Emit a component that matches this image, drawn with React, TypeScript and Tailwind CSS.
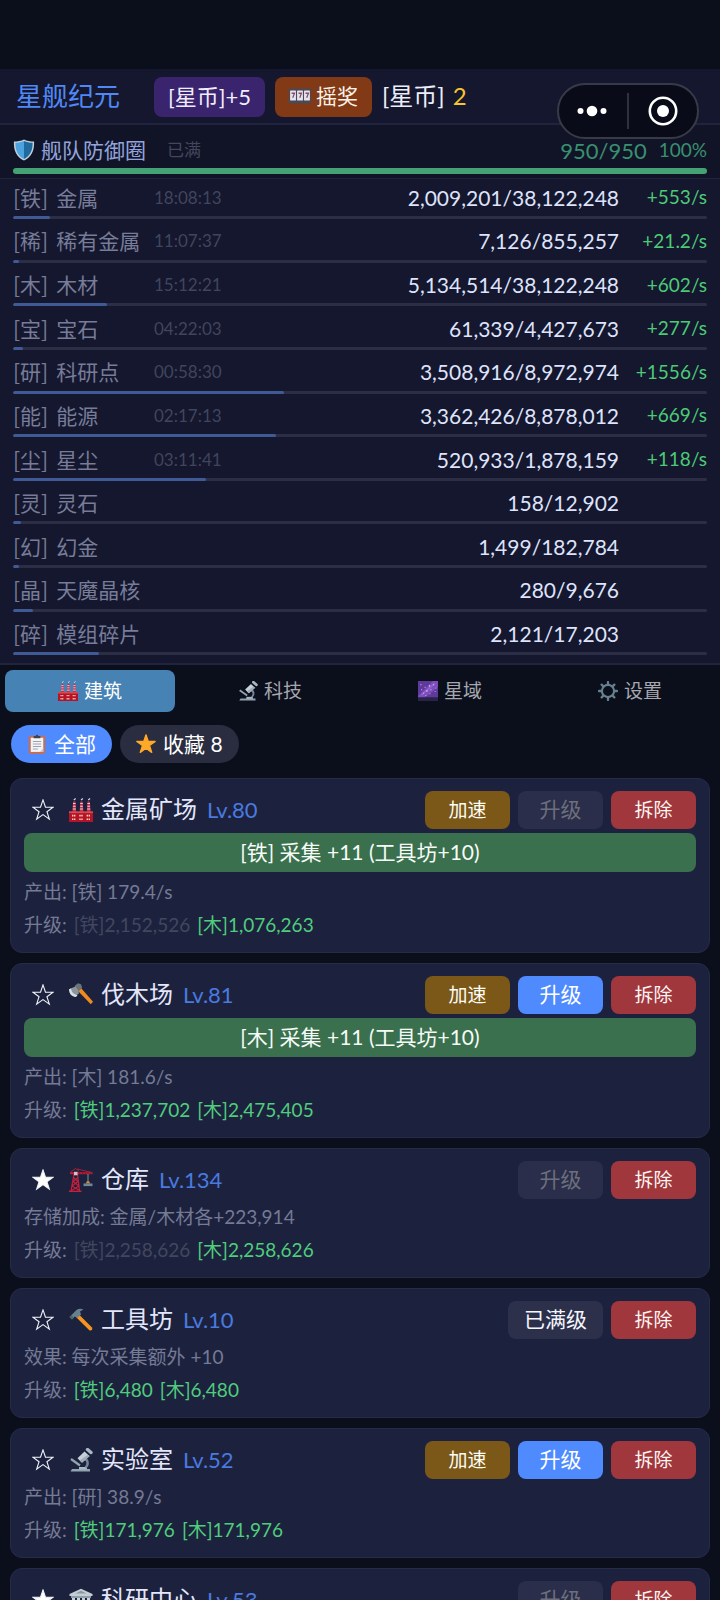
import { useState } from "react";
import type { ReactNode } from "react";

type Cost = { label: string; value: string; enough: boolean };

type Building = {
  name: string;
  level: number;
  icon: ReactNode;
  starred?: boolean;
  boost?: boolean;
  upgrade: "ready" | "disabled" | "max";
  collect?: string;
  effect: string;
  costs: Cost[];
};

function Icon({ className, children }: { className: string; children: ReactNode }) {
  return (
    <svg viewBox="0 0 24 24" className={`shrink-0 ${className}`} aria-hidden="true">
      {children}
    </svg>
  );
}

function FactoryIcon({ className }: { className: string }) {
  return (
    <Icon className={className}>
      {[3.6, 10.8, 18].map((x) => (
        <g key={x}>
          <path d={`M${x + 0.5} 3.500h2.400l.6 10.500h-3.600z`} fill="#c92f4a" />
          <path
            d={`M${x + 0.4} 5.500h2.600M${x + 0.3} 8.200h2.800M${x + 0.1} 11h3.200`}
            stroke="#e8cdd8"
            strokeWidth="1.1"
          />
          <path d={`M${x + 1.2} 1.900l1.900-1.300`} stroke="#cfd8e6" strokeWidth="1.200" />
        </g>
      ))}
      <path d="M0 14h24v10H0z" fill="#b5122c" />
      <path d="M0 13.300h24v1.800H0z" fill="#d94a4f" />
      <path
        d="M3 16.800h1.400v1.600H3zM5 16.800h1.400v1.600H5zM10.300 16.800h1.400v1.600h-1.400zM12.300 16.800h1.400v1.600h-1.400zM17.600 16.800H19v1.600h-1.400zM19.600 16.800H21v1.600h-1.400zM3 20.500h1.400v1.600H3zM5 20.500h1.400v1.600H5zM10.300 20.500h1.400v1.600h-1.400zM12.300 20.500h1.400v1.600h-1.400zM17.600 20.500H19v1.600h-1.400zM19.600 20.500H21v1.600h-1.400z"
        fill="#ffd6a0"
      />
    </Icon>
  );
}

function MicroscopeIcon({ className }: { className: string }) {
  return (
    <Icon className={className}>
      <path d="M3 21h18v2.500H1.500z" fill="#8fa3b0" />
      <path d="M10 19h8v2.500h-8z" fill="#a9b7c0" />
      <path d="M15 11c4 0 5 5.500 1.500 8.500" fill="none" stroke="#74879a" strokeWidth="2.400" />
      <path d="M2 11l9 6.500" stroke="#8fa3b0" strokeWidth="2.200" />
      <path d="M15.500 3.500l4.700 4.200-7.200 7-4.500-4.500z" fill="#c6d0d6" />
      <path d="M18.500 7L21 8l-8 6.800-2.400-2.200z" fill="#9dacb6" />
      <path d="M18.500 1.500l3.500 3" stroke="#a9b7c0" strokeWidth="3.400" strokeLinecap="round" />
    </Icon>
  );
}

function GalaxyIcon({ className }: { className: string }) {
  return (
    <Icon className={className}>
      <path d="M0 0h24v24H0z" fill="#5f3a9c" />
      <path d="M0 18L18 0h6v7L8 20H0z" fill="#7c4dbd" />
      <path d="M4 17L20 3" stroke="#a679dc" strokeWidth="2" opacity="0.5" />
      <path
        d="M3 4h1v1H3zM8 7h1v1H8zM13 5h1.500v1.500H13zM18 4h1v1h-1zM10 11h1.500v1.500H10zM15 10h1v1h-1zM6 14h1v1H6zM20 12h1v1h-1zM14 15h1v1h-1zM4 10h1v1H4zM21 8h1v1h-1zM9 17h1v1H9z"
        fill="#e9d6ff"
      />
      <path d="M0 19.500h24V24H0z" fill="#2a2348" />
    </Icon>
  );
}

function GearIcon({ className }: { className: string }) {
  return (
    <Icon className={className}>
      <circle cx="12" cy="12" r="7.300" fill="none" stroke="#66808d" strokeWidth="2.600" />
      <path
        d="M12 1.200v3M12 19.800v3M1.200 12h3M19.800 12h3M4.400 4.400l2 2M17.600 17.600l2 2M4.400 19.600l2-2M17.600 6.400l2-2"
        stroke="#66808d"
        strokeWidth="2.800"
        strokeLinecap="round"
      />
    </Icon>
  );
}

function ClipboardIcon({ className }: { className: string }) {
  return (
    <Icon className={className}>
      <rect x="2" y="2" width="20" height="22" rx="2" fill="#c0705a" />
      <path d="M4.500 4.500h15v17h-15z" fill="#f4f4f6" />
      <path d="M15.500 21.500l4-4.500v4.500z" fill="#c3c9d4" />
      <path d="M7 9h10M7 12h10M7 15h10M7 18h6" stroke="#9aa3b4" strokeWidth="1.300" />
      <path d="M8 2.500h2.500a1.500 1.500 0 013 0H16V5H8z" fill="#3d4451" />
    </Icon>
  );
}

const STAR_PATH = "M12 1l2.700 8H23l-6.700 4.900L18.900 22 12 17.100 5.100 22l2.600-8.100L1 9h8.300z";

function StarIcon({ className }: { className: string }) {
  return (
    <Icon className={className}>
      <path d={STAR_PATH} fill="#ffa929" stroke="#ffa929" strokeWidth="1.600" strokeLinejoin="round" />
    </Icon>
  );
}

function ShieldIcon({ className }: { className: string }) {
  return (
    <Icon className={className}>
      <path d="M12 .5c3 1.500 7 2.200 11 2.200.5 10-3 17.500-11 20.800C4 20.200.5 12.700 1 2.700 5 2.700 9 2 12 .5z" fill="#c3d0d9" />
      <path d="M12 2.200c-3 1.300-6 1.900-9.400 2C2.500 12.500 5.300 18.600 12 21.800z" fill="#4ba3e0" />
      <path d="M12 2.200c3 1.300 6 1.900 9.400 2 .1 8.300-2.700 14.400-9.400 17.600z" fill="#1f6a9e" />
    </Icon>
  );
}

function SlotIcon({ className }: { className: string }) {
  return (
    <Icon className={className}>
      <path d="M0 4h24v16H0z" fill="#454b58" />
      {[1.2, 8.8, 16.4].map((x) => (
        <g key={x}>
          <rect x={x} y="6" width="6.400" height="11" rx="0.6" fill="#e4e4ee" />
          <path d={`M${x + 1.6} 9h3.200l-1.900 5`} fill="none" stroke="#8d4a68" strokeWidth="1.400" />
        </g>
      ))}
    </Icon>
  );
}

function AxeIcon({ className }: { className: string }) {
  return (
    <Icon className={className}>
      <path d="M10 6.500L12 5l12 13.800-2.200 2.400L9 8z" fill="#f08a1d" />
      <path d="M6 2.500L9 .3l3 1 1.200 3.200L8.500 9.500 5.500 8z" fill="#6a747b" />
      <path d="M6.500 3.500L1.500 5.500 0 7l5.500 6.500L10 10.500 9 7z" fill="#8a959c" />
      <path d="M0 6.300c0 4.500 2.500 7.400 7 7.700l1.500-1.800C4.500 11.500 2.500 9.300 2 5.600z" fill="#d9e0e4" />
    </Icon>
  );
}

function HammerIcon({ className }: { className: string }) {
  return (
    <Icon className={className}>
      <path d="M9 5.500L23 19.500c1 2-.8 3.800-2.700 2.800L6.500 8.500z" fill="#f5951f" />
      <path d="M.5 9L7.500 2C9.500.5 12 .3 14.500 1.500L11 3.500l1 3-3.500 3.300-2.700-1.300L3 11.500z" fill="#66808d" />
      <path d="M.5 9l1.800-1.800L4.800 9.800 3 11.500z" fill="#4a626f" />
    </Icon>
  );
}

function CraneIcon({ className }: { className: string }) {
  return (
    <Icon className={className}>
      <path
        d="M5 6L2 23M8.500 6L10.500 23M4.500 9.500l4.500 4-6 4.500 7.500 4.500M9 9.500l-5 4 6 4.500-7.500 4.500"
        fill="none"
        stroke="#c81f3a"
        strokeWidth="1.200"
      />
      <path d="M0 23.300h12.500" stroke="#c81f3a" strokeWidth="1.400" />
      <path d="M1.500 4l5-3.500L10 3M8 1l15 3.500" fill="none" stroke="#a81f36" strokeWidth="1" />
      <path d="M1 4.200h22.500v2H1z" fill="#c41f3a" />
      <path d="M10 5.200h13" stroke="#5a1524" strokeWidth="1" strokeDasharray="1.300 1.500" />
      <path d="M5 3.800h3.500v3.500H5z" fill="#c9c4cf" />
      <path d="M19 6v6.500" stroke="#8f9aa3" strokeWidth="0.900" />
      <path d="M19 12l-2.500 3.500h5z" fill="#c98a4a" />
      <path d="M14.500 15.500h9v2.600h-9z" fill="#6f8791" />
    </Icon>
  );
}

function TempleIcon({ className }: { className: string }) {
  return (
    <Icon className={className}>
      <path d="M12 .8L23.500 6v2H.5V6z" fill="#c3ced4" />
      <path d="M12 2.800l5.500 2.700h-11z" fill="#8797a1" />
      <path d="M2 8h20v2H2z" fill="#8e9fa9" />
      <path d="M3 10h3v10H3zM8 10h3v10H8zM13 10h3v10h-3zM18 10h3v10h-3z" fill="#c9d3d8" />
      <path d="M1 20h22v3.500H1z" fill="#9cabb4" />
    </Icon>
  );
}

const RESOURCES = [
  { tag: "铁", name: "金属", time: "18:08:13", amount: "2,009,201/38,122,248", rate: "+553/s", percent: 5.3 },
  { tag: "稀", name: "稀有金属", time: "11:07:37", amount: "7,126/855,257", rate: "+21.2/s", percent: 0.9 },
  { tag: "木", name: "木材", time: "15:12:21", amount: "5,134,514/38,122,248", rate: "+602/s", percent: 13.5 },
  { tag: "宝", name: "宝石", time: "04:22:03", amount: "61,339/4,427,673", rate: "+277/s", percent: 1.4 },
  { tag: "研", name: "科研点", time: "00:58:30", amount: "3,508,916/8,972,974", rate: "+1556/s", percent: 39.1 },
  { tag: "能", name: "能源", time: "02:17:13", amount: "3,362,426/8,878,012", rate: "+669/s", percent: 37.9 },
  { tag: "尘", name: "星尘", time: "03:11:41", amount: "520,933/1,878,159", rate: "+118/s", percent: 27.8 },
  { tag: "灵", name: "灵石", amount: "158/12,902", percent: 1.2 },
  { tag: "幻", name: "幻金", amount: "1,499/182,784", percent: 0.9 },
  { tag: "晶", name: "天魔晶核", amount: "280/9,676", percent: 2.9 },
  { tag: "碎", name: "模组碎片", amount: "2,121/17,203", percent: 12.4 },
];

const TABS = [
  { name: "建筑", icon: <FactoryIcon className="h-5 w-5" /> },
  { name: "科技", icon: <MicroscopeIcon className="h-5 w-5" /> },
  { name: "星域", icon: <GalaxyIcon className="h-5 w-5" /> },
  { name: "设置", icon: <GearIcon className="h-5 w-5" /> },
];

const BUILDINGS: Building[] = [
  {
    name: "金属矿场",
    level: 80,
    icon: <FactoryIcon className="h-6 w-6" />,
    boost: true,
    upgrade: "disabled",
    collect: "[铁] 采集 +11 (工具坊+10)",
    effect: "产出: [铁] 179.4/s",
    costs: [
      { label: "铁", value: "2,152,526", enough: false },
      { label: "木", value: "1,076,263", enough: true },
    ],
  },
  {
    name: "伐木场",
    level: 81,
    icon: <AxeIcon className="h-6 w-6" />,
    boost: true,
    upgrade: "ready",
    collect: "[木] 采集 +11 (工具坊+10)",
    effect: "产出: [木] 181.6/s",
    costs: [
      { label: "铁", value: "1,237,702", enough: true },
      { label: "木", value: "2,475,405", enough: true },
    ],
  },
  {
    name: "仓库",
    level: 134,
    icon: <CraneIcon className="h-6 w-6" />,
    starred: true,
    upgrade: "disabled",
    effect: "存储加成: 金属/木材各+223,914",
    costs: [
      { label: "铁", value: "2,258,626", enough: false },
      { label: "木", value: "2,258,626", enough: true },
    ],
  },
  {
    name: "工具坊",
    level: 10,
    icon: <HammerIcon className="h-6 w-6" />,
    upgrade: "max",
    effect: "效果: 每次采集额外 +10",
    costs: [
      { label: "铁", value: "6,480", enough: true },
      { label: "木", value: "6,480", enough: true },
    ],
  },
  {
    name: "实验室",
    level: 52,
    icon: <MicroscopeIcon className="h-6 w-6" />,
    boost: true,
    upgrade: "ready",
    effect: "产出: [研] 38.9/s",
    costs: [
      { label: "铁", value: "171,976", enough: true },
      { label: "木", value: "171,976", enough: true },
    ],
  },
  {
    name: "科研中心",
    level: 53,
    icon: <TempleIcon className="h-6 w-6" />,
    starred: true,
    upgrade: "disabled",
    effect: "产出: [研] 40.1/s",
    costs: [],
  },
];

function Header() {
  return (
    <header className="relative flex items-center gap-[10px] border-b-2 border-[#20243f] bg-[#14172e] px-4 pt-2 pb-[6px]">
      <h1 className="mr-6 pb-[2px] text-[26px] leading-[38px] text-[#5088f5]">星舰纪元</h1>
      <button className="h-10 rounded-lg bg-[#39246d] px-[14px] pb-[2px] text-[22px] text-[#f0ecff]">[星币]+5</button>
      <button className="flex h-10 items-center gap-[5px] rounded-lg bg-[#823915] px-[14px] pb-[2px] text-[21px] text-[#fdf3e9]">
        <SlotIcon className="h-[22px] w-[22px]" />
        摇奖
      </button>
      <div className="flex gap-2 pb-[2px] text-[24px] leading-[38px] text-[#eceefa]">
        [星币]
        <span className="text-[#f8c32c]">2</span>
      </div>

      {/* mini program capsule, floats above the page */}
      <div className="absolute top-[14px] right-[21px] z-10 flex h-14 w-[142px] items-center rounded-full border-2 border-[#393a49] bg-[#090c18]">
        <button aria-label="更多" className="flex h-full flex-1 items-center justify-center">
          <svg viewBox="0 0 32 12" className="h-3 w-8" fill="#fff">
            <circle cx="3.500" cy="6" r="3" />
            <circle cx="15" cy="6" r="5.300" />
            <circle cx="26.500" cy="6" r="3" />
          </svg>
        </button>
        <div className="h-9 w-[2px] bg-[#2f313f]"></div>
        <button aria-label="关闭" className="flex h-full flex-1 items-center justify-center">
          <svg viewBox="0 0 30 30" className="h-[30px] w-[30px]">
            <circle cx="15" cy="15" r="13.200" fill="none" stroke="#fff" strokeWidth="2.600" />
            <circle cx="15" cy="15" r="6" fill="#fff" />
          </svg>
        </button>
      </div>
    </header>
  );
}

function Defense() {
  return (
    <section className="border-b border-[#20243f] bg-[#111427] px-[13px] pt-[9px] pb-1">
      <div className="mb-[2px] flex h-8 items-center">
        <ShieldIcon className="h-[22px] w-[22px]" />
        <span className="ml-[6px] text-[21px] text-[#93a4dd]">舰队防御圈</span>
        <span className="ml-[21px] text-[17px] text-[#43475d]">已满</span>
        <span className="flex-1"></span>
        <span className="text-[22px] text-[#399070]">950/950</span>
        <span className="ml-3 text-[19px] text-[#399070]">100%</span>
      </div>
      <div className="h-[6px] rounded-full bg-[#44a274]"></div>
    </section>
  );
}

function ResourceList() {
  return (
    <ul className="grid min-h-[480px] auto-rows-fr">
      {RESOURCES.map((item) => (
        <li key={item.tag} className="px-[13px] pt-[3px]">
          <div className="mb-[3px] flex h-[31px] items-center">
            <span className="flex w-[141px] gap-2 font-['Noto_Sans_CJK_SC',sans-serif] text-[21px] whitespace-nowrap text-[#777c98]">
              <span>[{item.tag}]</span>
              <span>{item.name}</span>
            </span>
            <span className="text-[17px] text-[#41455c]">{item.time}</span>
            <span className="flex-1 text-right text-[21px] text-[#dfe3fb]">{item.amount}</span>
            <span className="w-[88px] text-right text-[19px] text-[#4ccb76]">{item.rate}</span>
          </div>
          <div className="h-[3px] overflow-hidden rounded-full bg-[#2b2e45]">
            <div className="h-full rounded-full bg-[#405a96]" style={{ width: `${item.percent}%` }}></div>
          </div>
        </li>
      ))}
    </ul>
  );
}

function UpgradeButton({ state }: { state: Building["upgrade"] }) {
  if (state === "max") {
    return (
      <button className="h-[38px] w-[95px] rounded-lg bg-[#2c304b] pb-[2px] text-[21px] text-[#f5f6fc]">已满级</button>
    );
  }

  if (state === "disabled") {
    return (
      <button disabled className="h-[38px] w-[85px] rounded-lg bg-[#2a2e4a] pb-[2px] text-[21px] text-[#6d6f7c]">
        升级
      </button>
    );
  }

  return <button className="h-[38px] w-[85px] rounded-lg bg-[#4f8bff] pb-[2px] text-[21px] text-white">升级</button>;
}

function BuildingCard({ building }: { building: Building }) {
  const [starred, setStarred] = useState(building.starred ?? false);

  return (
    <article className="rounded-xl border border-[#272b45] bg-[#1c223e] px-[13px] pt-3 pb-[11px]">
      <div className="flex h-[38px] items-center gap-2">
        <button
          aria-label="收藏"
          aria-pressed={starred}
          className="flex h-[38px] w-[37px] items-center justify-center"
          onClick={() => setStarred(!starred)}
        >
          <svg viewBox="0 0 24 24" className="h-[22px] w-[22px]">
            <path d={STAR_PATH} fill={starred ? "#fff" : "none"} stroke="#f2f3fa" strokeWidth="1.200" />
          </svg>
        </button>
        {building.icon}
        <h2 className="mr-[2px] pb-[2px] text-[24px] text-[#e4e7fb]">{building.name}</h2>
        <span className="pb-[2px] text-[22px] text-[#4a7ae0]">Lv.{building.level}</span>
        <div className="flex-1"></div>
        {building.boost ? (
          <button className="h-[38px] w-[85px] rounded-lg bg-[#7b5818] text-[19px] text-[#fffdf5]">加速</button>
        ) : null}
        <UpgradeButton state={building.upgrade} />
        <button className="h-[38px] w-[85px] rounded-lg bg-[#a0373c] text-[19px] text-[#fff5f5]">拆除</button>
      </div>

      {building.collect ? (
        <button className="mt-1 mb-[3px] block h-[39px] w-full rounded-lg bg-[#3a704d] pb-[2px] text-[21px] text-[#f6fbf7]">
          {building.collect}
        </button>
      ) : null}

      <div className="mt-px text-[19px] leading-[33px] text-[#757a95]">
        <p>{building.effect}</p>
        <p className="flex gap-[7px]">
          <span>升级:</span>
          {building.costs.map((cost) => (
            <span key={cost.label} className={cost.enough ? "text-[#50cd7c]" : "text-[#42475f]"}>
              [{cost.label}]{cost.value}
            </span>
          ))}
        </p>
      </div>
    </article>
  );
}

function App() {
  const [tab, setTab] = useState("建筑");
  const [onlyStarred, setOnlyStarred] = useState(false);

  const buildings = onlyStarred ? BUILDINGS.filter((item) => item.starred) : BUILDINGS;

  return (
    <div className="flex h-screen flex-col overflow-hidden bg-[#0b0e1b] pt-[69px] font-['Lato','Noto_Sans_CJK_SC',sans-serif]">
      <Header />
      <div className="border-b-2 border-[#20243f] bg-[#14172e] pb-1">
        <Defense />
        <ResourceList />
      </div>

      <nav className="grid grid-cols-4 gap-[10px] p-[5px]">
        {TABS.map((item) => (
          <button
            key={item.name}
            className={`flex h-[42px] items-center justify-center gap-[6px] rounded-lg text-[19px] ${
              tab === item.name ? "bg-[#4682b4] text-white" : "text-[#a6a8b0]"
            }`}
            onClick={() => setTab(item.name)}
          >
            {item.icon}
            {item.name}
          </button>
        ))}
      </nav>

      <div className="flex gap-2 px-[11px] pt-2">
        <button
          className={`flex h-[38px] items-center gap-[7px] rounded-full px-4 pb-px text-[21px] text-white ${
            onlyStarred ? "bg-[#2a2c40]" : "bg-[#4f8bff]"
          }`}
          onClick={() => setOnlyStarred(false)}
        >
          <ClipboardIcon className="h-5 w-5" />
          全部
        </button>
        <button
          className={`flex h-[38px] items-center gap-[7px] rounded-full px-4 pb-px text-[21px] text-white ${
            onlyStarred ? "bg-[#4f8bff]" : "bg-[#2a2c40]"
          }`}
          onClick={() => setOnlyStarred(true)}
        >
          <StarIcon className="h-5 w-5" />
          收藏 8
        </button>
      </div>

      <main className="flex min-h-0 flex-1 flex-col gap-[10px] overflow-hidden px-[10px] pt-[15px]">
        {buildings.map((item) => (
          <div key={item.name} className="shrink-0">
            <BuildingCard building={item} />
          </div>
        ))}
      </main>
    </div>
  );
}

export default App;
